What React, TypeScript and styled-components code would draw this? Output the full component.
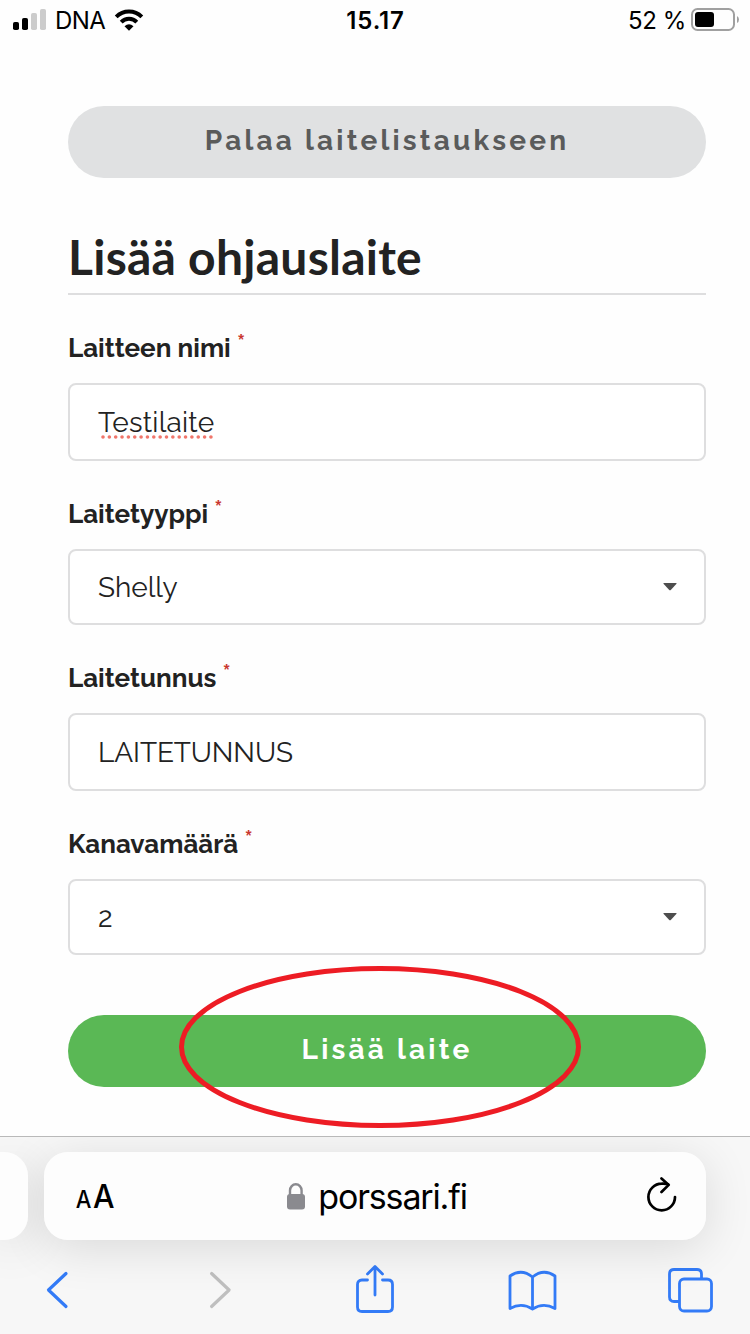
import React from "react";
import styled, { createGlobalStyle } from "styled-components";

const GlobalStyle = createGlobalStyle`
  * { box-sizing: border-box; }
  body { margin: 0; background: #fff; }
`;

const formFont = `Raleway, Lato, "Open Sans", sans-serif`;
const systemFont = `Inter, "Liberation Sans", sans-serif`;

const Screen = styled.div`
  position: relative;
  display: flex;
  flex-direction: column;
  width: 750px;
  height: 1334px;
  overflow: hidden;
  background: #fefefe;
  color: #222;
`;

const StatusBar = styled.header`
  display: grid;
  grid-template-columns: 1fr auto 1fr;
  align-items: center;
  height: 40px;
  padding: 0 11px 0 12px;
  font: 400 24px/38px ${systemFont};
  color: #000;
`;

const StatusGroup = styled.div<{ $end?: boolean }>`
  display: flex;
  align-items: center;
  justify-content: ${(p) => (p.$end ? "flex-end" : "flex-start")};
  white-space: nowrap;
`;

const StatusText = styled.span<{ $bold?: boolean; $spacing?: number }>`
  padding-top: 2px;
  font-weight: ${(p) => (p.$bold ? 600 : 400)};
  letter-spacing: ${(p) => p.$spacing ?? 0}px;
`;

const SignalIcon = styled.svg`
  margin-right: 9px;
`;

const WifiIcon = styled.svg`
  margin-left: 9px;
`;

const BatteryIcon = styled.svg`
  margin-left: 5px;
`;

const Main = styled.main`
  display: flex;
  flex-direction: column;
  flex: 1;
  padding: 66px 44px 0 68px;
  font-family: ${formFont};
`;

const PillButton = styled.button<{ $primary?: boolean }>`
  height: 72px;
  padding: 0 0 2px;
  border: 0;
  border-radius: 36px;
  background: ${(p) => (p.$primary ? "#5ab855" : "#e0e1e2")};
  color: ${(p) => (p.$primary ? "#fff" : "#5a5b5b")};
  font: 700 28px/34px ${formFont};
  letter-spacing: 3.2px;
`;

const Title = styled.h1`
  height: 117px;
  margin: 0;
  padding-top: 50px;
  border-bottom: 2px solid #dededf;
  font: 700 48px/58px Lato, sans-serif;
  letter-spacing: 0.25px;
`;

const Form = styled.form`
  display: flex;
  flex-direction: column;
`;

const Label = styled.label`
  display: flex;
  height: 88px;
  padding-top: 37px;
  font-size: 26px;
  font-weight: 700;
  line-height: 32px;
`;

const Required = styled.span`
  margin: -4px 0 0 6px;
  color: #c9372f;
  font-size: 26px;
  font-weight: 600;
  line-height: 32px;
`;

const Control = styled.div<{ $select?: boolean }>`
  display: flex;
  align-items: center;
  justify-content: space-between;
  height: ${(p) => (p.$select ? 76 : 78)}px;
  padding: 0 26px 0 28px;
  border: 2px solid #dededf;
  border-radius: 8px;
  background: #fff;
`;

const Value = styled.span<{ $spacing: number }>`
  position: relative;
  padding-top: 2px;
  font-size: 28px;
  line-height: 34px;
  letter-spacing: ${(p) => p.$spacing}px;
`;

const SpellMark = styled.svg`
  position: absolute;
  left: 2.7px;
  top: 31px;
`;

const Submit = styled.div`
  display: flex;
  flex-direction: column;
  padding-top: 60px;
`;

const Highlight = styled.svg`
  position: absolute;
  left: 179px;
  top: 966px;
`;

const BrowserBar = styled.footer`
  display: flex;
  flex-direction: column;
  height: 198px;
  border-top: 1px solid #b9b9b9;
  background: #f7f7f7;
  overflow: hidden;
`;

const TabStrip = styled.div`
  display: flex;
  gap: 16px;
  padding-top: 15px;
  isolation: isolate;
`;

/* The shadow sits on its own layer so that neighbouring cards stay clean. */
const TabCard = styled.div`
  position: relative;
  height: 88px;
  border-radius: 24px;
  background: #fdfdfd;

  &::before {
    content: "";
    position: absolute;
    inset: 0;
    z-index: -1;
    border-radius: inherit;
    box-shadow: 0 8px 48px rgba(0, 0, 0, 0.12);
  }
`;

const PreviousTab = styled(TabCard)`
  width: 28px;
  border-radius: 0 24px 24px 0;
`;

const AddressBar = styled(TabCard)`
  display: grid;
  grid-template-columns: 1fr auto 1fr;
  align-items: center;
  width: 662px;
  padding: 0 28px 0 31px;
  font-family: ${systemFont};
  color: #000;
`;

const TextSize = styled.div`
  display: flex;
  align-items: baseline;
  padding-top: 4px;
  font-weight: 500;
  line-height: 40px;
`;

const SizeGlyph = styled.span<{ $large?: boolean }>`
  font-size: ${(p) => (p.$large ? 33 : 24)}px;
  transform: scaleX(0.92);
`;

const Host = styled.div`
  display: flex;
  align-items: center;
  gap: 12px;
  font-size: 34px;
  line-height: 44px;
  letter-spacing: -1.15px;
`;

const HostName = styled.span`
  padding-top: 2px;
`;

const Reload = styled.div`
  display: flex;
  justify-content: flex-end;
`;

const Toolbar = styled.nav`
  display: flex;
  justify-content: space-between;
  padding: 22px 32px 0 30px;
`;

const ToolButton = styled.span`
  display: flex;
  justify-content: center;
  width: 56px;
`;

const Arrow = () => (
  <svg width="16" height="10" viewBox="0 0 16 10">
    <path d="M2 1H14Q15.2 1 14.3 2L9 7.8Q8 8.8 7 7.8L1.7 2Q.8 1 2 1Z" fill="#4d4d4d" />
  </svg>
);

type FieldProps = {
  label: string;
  value: string;
  spacing?: number;
  select?: boolean;
  misspelled?: boolean;
};

const Field = ({ label, value, spacing = 0, select, misspelled }: FieldProps) => (
  <>
    <Label>
      {label}
      <Required>*</Required>
    </Label>
    <Control $select={select}>
      <Value $spacing={spacing}>
        {value}
        {misspelled && (
          <SpellMark width="114" height="4" viewBox="0 0 114 4">
            <path d="M2 2H112" stroke="#f0766b" strokeWidth="3.6" strokeLinecap="round" strokeDasharray="0 6.35" />
          </SpellMark>
        )}
      </Value>
      {select && <Arrow />}
    </Control>
  </>
);

export default function App() {
  return (
    <Screen>
      <GlobalStyle />
      <StatusBar>
        <StatusGroup>
          <SignalIcon width="34" height="22" viewBox="0 0 34 22">
            <rect x="1" y="13" width="6" height="8" rx="1.8" />
            <rect x="10" y="9" width="6" height="12" rx="1.8" />
            <rect x="19" y="4" width="6" height="17" rx="1.8" fill="#ccc" />
            <rect x="28" y="0" width="6" height="21" rx="1.8" fill="#ccc" />
          </SignalIcon>
          <StatusText $spacing={-0.6}>DNA</StatusText>
          <WifiIcon width="30" height="22" viewBox="0 0 30 22">
            <path d="M2.2 7.8A18.2 18.2 0 0 1 27.8 7.8" fill="none" stroke="#000" strokeWidth="4" />
            <path d="M7.2 13.1A11 11 0 0 1 22.8 13.1" fill="none" stroke="#000" strokeWidth="4" />
            <path d="M10.5 17.2Q15 13.4 19.5 17.2L15 21.8Z" />
          </WifiIcon>
        </StatusGroup>
        <StatusText $bold $spacing={0.9}>
          15.17
        </StatusText>
        <StatusGroup $end>
          <StatusText $spacing={-0.4}>52 %</StatusText>
          <BatteryIcon width="48" height="24" viewBox="0 0 48 24">
            <rect x="1" y="1" width="42" height="21" rx="5.5" fill="none" stroke="#a0a0a0" strokeWidth="2" />
            <rect x="4" y="4" width="19" height="15" rx="3" />
            <path d="M46 8Q48 9 48 11.5T46 15Z" fill="#a0a0a0" />
          </BatteryIcon>
        </StatusGroup>
      </StatusBar>

      <Main>
        <PillButton type="button">Palaa laitelistaukseen</PillButton>
        <Title>Lisää ohjauslaite</Title>
        <Form>
          <Field label="Laitteen nimi" value="Testilaite" spacing={0.25} misspelled />
          <Field label="Laitetyyppi" value="Shelly" select />
          <Field label="Laitetunnus" value="LAITETUNNUS" spacing={-0.1} />
          <Field label="Kanavamäärä" value="2" select />
          <Submit>
            <PillButton type="button" $primary>
              Lisää laite
            </PillButton>
          </Submit>
        </Form>
      </Main>

      <BrowserBar>
        <TabStrip>
          <PreviousTab />
          <AddressBar>
            <TextSize>
              <SizeGlyph>A</SizeGlyph>
              <SizeGlyph $large>A</SizeGlyph>
            </TextSize>
            <Host>
              <svg width="20" height="27" viewBox="0 0 20 27">
                <path d="M4 12V7.5A5.8 6.2 0 0 1 15.6 7.5V12" fill="none" stroke="#8a8a8f" strokeWidth="2.4" />
                <rect x="1" y="11" width="18" height="15.5" rx="3" fill="#8a8a8f" />
              </svg>
              <HostName>porssari.fi</HostName>
            </Host>
            <Reload>
              <svg width="32" height="38" viewBox="0 2 32 38" fill="none" stroke="#000" strokeWidth="2.7" strokeLinecap="round" strokeLinejoin="round">
                <path d="M29 22A13.3 13.3 0 1 1 15.7 8.7Q19 8.4 22 9.3" />
                <path d="M15.5 3.5L22.7 9.9L15.5 17" />
              </svg>
            </Reload>
          </AddressBar>
        </TabStrip>
        <Toolbar>
          <ToolButton>
            <svg width="28" height="56" viewBox="0 0 28 56" fill="none" stroke="#337bf7" strokeWidth="3.2" strokeLinecap="round" strokeLinejoin="round">
              <path d="M22 11.5L4.5 28L22 44.5" />
            </svg>
          </ToolButton>
          <ToolButton>
            <svg width="36" height="56" viewBox="0 0 36 56" fill="none" stroke="#bfbfbf" strokeWidth="3.2" strokeLinecap="round" strokeLinejoin="round">
              <path d="M13.6 11.5L31.1 28L13.6 44.5" />
            </svg>
          </ToolButton>
          <ToolButton>
            <svg width="42" height="56" viewBox="-2 0 42 56" fill="none" stroke="#337bf7" strokeWidth="2.8" strokeLinecap="round" strokeLinejoin="round">
              <path d="M12.5 18H7Q2.5 18 2.5 22.5V45Q2.5 49.5 7 49.5H33Q37.5 49.5 37.5 45V22.5Q37.5 18 33 18H27.5M20 33V5M12.5 12L20 4.500L27.500 12" />
            </svg>
          </ToolButton>
          <ToolButton>
            <svg width="50" height="56" viewBox="-.5 0 50 56" fill="none" stroke="#337bf7" strokeWidth="2.8" strokeLinecap="round" strokeLinejoin="round">
              <path d="M25 15Q14 6 2.5 14V46.5Q14 40 25 47Q36 40 47.5 46.5V14Q36 6 25 15V47" />
            </svg>
          </ToolButton>
          <ToolButton>
            <svg width="50" height="56" viewBox="-2 0 50 56" fill="none" stroke="#337bf7" strokeWidth="2.8" strokeLinejoin="round">
              <path d="M12 39.5H7Q2.5 39.5 2.5 35V12Q2.5 7.5 7 7.5H30Q34.5 7.5 34.5 12V17" />
              <rect x="12.5" y="17" width="32" height="32" rx="4.5" />
            </svg>
          </ToolButton>
        </Toolbar>
      </BrowserBar>
      <Highlight width="402" height="162" viewBox="0 0 402 162">
        <ellipse cx="201" cy="81" rx="198.5" ry="78.5" fill="none" stroke="#ed1c24" strokeWidth="5" />
      </Highlight>
    </Screen>
  );
}
